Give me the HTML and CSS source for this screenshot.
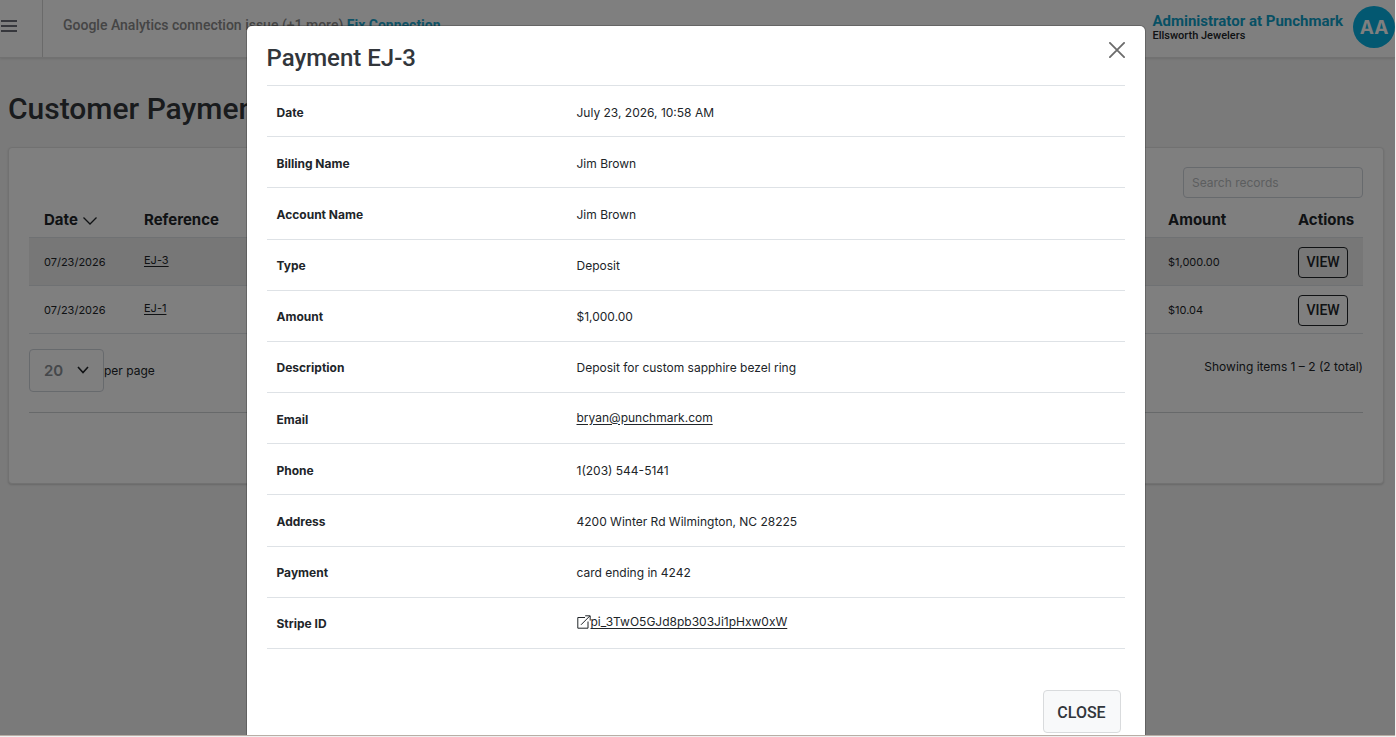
FILE: index.html
```html
<!DOCTYPE html>
<html lang="en">
<head>
  <meta charset="UTF-8" />
  <meta name="viewport" content="width=device-width, initial-scale=1.0" />
  <title>Customer Payments</title>
  <link rel="stylesheet" href="styles.css">
</head>
<body>
  <div class="app">
    <!-- Top bar -->
    <header class="topbar">
      <button class="menu-toggle" type="button" aria-label="Menu">
        <svg width="16" height="12" viewBox="0 0 16 12" stroke="currentColor" stroke-width="2"><path d="M0 1h16M0 6h16M0 11h16" /></svg>
      </button>
      <p class="notice">Google Analytics connection issue (+1 more) <a href="#">Fix Connection</a></p>
      <div class="account">
        <a href="#" class="account-name">Administrator at Punchmark</a>
        <span class="account-store">Ellsworth Jewelers</span>
      </div>
      <div class="avatar">AA</div>
    </header>

    <main>
      <h1>Customer Payments</h1>
      <section class="card">
        <input class="search" type="text" placeholder="Search records" aria-label="Search records" />
        <table class="payments">
          <thead>
            <tr>
              <th class="col-date">Date <svg width="14" height="8" viewBox="0 0 14 8" fill="none" stroke="currentColor" stroke-width="1.3"><path d="M0.5 0.5L7 7L13.5 0.5" /></svg></th>
              <th>Reference</th>
              <th class="col-amount">Amount</th>
              <th class="col-actions">Actions</th>
            </tr>
          </thead>
          <tbody>
            <tr>
              <td>07/23/2026</td>
              <td class="link-cell"><a href="#">EJ-3</a></td>
              <td>$1,000.00</td>
              <td><button class="view" type="button">VIEW</button></td>
            </tr>
            <tr>
              <td>07/23/2026</td>
              <td class="link-cell"><a href="#">EJ-1</a></td>
              <td>$10.04</td>
              <td><button class="view" type="button">VIEW</button></td>
            </tr>
          </tbody>
        </table>
        <div class="pager">
          <div class="per-page">
            <span class="select-wrap">
              <select id="perPage"><option>20</option></select>
              <svg width="12" height="8" viewBox="0 0 12 8" fill="none" stroke="currentColor" stroke-width="1.6"><path d="M1 1L6 6.5L11 1" /></svg>
            </span>
            <label for="perPage">per page</label>
          </div>
          <span class="showing">Showing items 1 – 2 (2 total)</span>
        </div>
      </section>
    </main>

    <!-- Payment dialog -->
    <div class="overlay">
      <div class="modal" role="dialog" aria-labelledby="modalTitle">
        <div class="modal-header">
          <h2 id="modalTitle">Payment EJ-3</h2>
          <button class="modal-x" type="button" aria-label="Close">
            <svg width="16" height="16" viewBox="0 0 16 16" stroke="currentColor" stroke-width="1.8" stroke-linecap="round"><path d="M0.9 0.9L15.1 15.1M15.1 0.9L0.9 15.1" /></svg>
          </button>
        </div>
        <table class="details">
          <tr><th>Date</th><td>July 23, 2026, 10:58 AM</td></tr>
          <tr><th>Billing Name</th><td>Jim Brown</td></tr>
          <tr><th>Account Name</th><td>Jim Brown</td></tr>
          <tr><th>Type</th><td>Deposit</td></tr>
          <tr><th>Amount</th><td>$1,000.00</td></tr>
          <tr><th>Description</th><td>Deposit for custom sapphire bezel ring</td></tr>
          <tr><th>Email</th><td class="link-cell"><a href="#">bryan@punchmark.com</a></td></tr>
          <tr><th>Phone</th><td>1(203) 544-5141</td></tr>
          <tr><th>Address</th><td>4200 Winter Rd Wilmington, NC 28225</td></tr>
          <tr><th>Payment</th><td>card ending in 4242</td></tr>
          <tr>
            <th>Stripe ID</th>
            <td class="link-cell"><a href="#"><svg width="14" height="14" viewBox="0 0 14 14" fill="none" stroke="currentColor"><path d="M8 2.5H0.8V13.2H11V6.5M4 9.8L12.8 1M8.2 0.8H13.2V5.6" /></svg>pi_3TwO5GJd8pb303Ji1pHxw0xW</a></td>
          </tr>
        </table>
        <div class="modal-footer">
          <button class="close-btn" type="button">CLOSE</button>
        </div>
      </div>
    </div>
  </div>
</body>
</html>
```

FILE: styles.css
```css
* {
  box-sizing: border-box;
}
body {
  margin: 0;
  padding: 0 1px 1px 0;
  height: 100vh;
  background: #f0f0f0;
  font-family: Inter, "Liberation Sans", sans-serif;
  font-size: 12px;
  color: #212529;
}
a {
  color: inherit;
  text-underline-offset: 2px;
}
button, input, select {
  font-family: inherit;
}
table {
  width: 100%;
  border-collapse: collapse;
  table-layout: fixed;
}
th {
  text-align: left;
}
.app {
  position: relative;
  height: 100%;
  overflow: hidden;
  background: #f4f4f4;
  border-bottom: 1px solid #b8aea6;
}

/* Top bar */
.topbar {
  display: flex;
  height: 58px;
  background: #fff;
  border-bottom: 1px solid #e2e2e2;
  box-shadow: 0 1px 2px rgba(0, 0, 0, 0.1);
  font-family: Roboto, sans-serif;
}
.menu-toggle {
  width: 43px;
  padding: 0 0 2px 1px;
  text-align: left;
  background: none;
  border: none;
  border-right: 1px solid #d4d4d4;
  color: #6c6f78;
}
.notice {
  flex: 1;
  margin: 0;
  padding: 15px 20px;
  font-size: 14px;
  line-height: 20px;
  font-weight: 500;
  color: #8a8a8a;
}
.notice a {
  font-weight: 700;
  color: #1ea5cc;
  text-decoration: none;
}
.account {
  display: flex;
  flex-direction: column;
  padding: 13px 10px 0 0;
}
.account-name {
  font-size: 15px;
  line-height: 16px;
  font-weight: 700;
  color: #0fa0c8;
  text-decoration: none;
}
.account-store {
  font-size: 11px;
  line-height: 14px;
  font-weight: 500;
}
.avatar {
  width: 42px;
  height: 42px;
  margin-top: 6px;
  border-radius: 50%;
  background: #06b0e2;
  color: #fff;
  font-family: Inter, sans-serif;
  font-size: 19px;
  font-weight: 700;
  line-height: 43px;
  text-align: center;
}

/* Payments list */
main {
  padding: 0 11px 0 8px;
}
h1 {
  margin: 0;
  padding: 31px 0 18px;
  font-family: Roboto, sans-serif;
  font-size: 30px;
  line-height: 40px;
  font-weight: 500;
  color: #32363b;
}
.card {
  display: flex;
  flex-direction: column;
  padding: 19px 20px 70px;
  background: #fff;
  border: 1px solid #e2e2e2;
  border-radius: 4px;
  box-shadow: 0 1px 2px rgba(0, 0, 0, 0.15);
}
.search {
  align-self: flex-end;
  width: 180px;
  height: 31px;
  padding: 0 8px;
  border: 1px solid #ced4da;
  border-radius: 4px;
  background: none;
  font-size: 12px;
}
.search::placeholder {
  color: #b9bcc0;
}
.payments th {
  height: 39px;
  padding: 4px 15px 0;
  font-size: 15px;
  font-weight: 700;
  border-bottom: 1px solid #dee2e6;
}
.payments td {
  height: 48px;
  padding: 2px 15px 0;
  font-size: 11px;
  border-bottom: 1px solid #dee2e6;
}
.payments tbody tr:first-child {
  background: #efefef;
}
.payments th svg {
  margin-left: 2px;
}
.payments .col-date {
  width: 100px;
  padding-right: 0;
  white-space: nowrap;
}
.payments .col-amount {
  width: 130px;
}
.payments .col-actions {
  width: 80px;
  padding-right: 0;
}
.view {
  display: block;
  width: 50px;
  height: 31px;
  padding: 0;
  border: 1px solid #212529;
  border-radius: 4px;
  background: none;
  font-family: Roboto, sans-serif;
  font-size: 14px;
  font-weight: 500;
  color: #212529;
}
.pager {
  display: flex;
  justify-content: space-between;
  padding: 15px 0 20px;
  border-bottom: 1px solid #cfd2d5;
}
.per-page {
  display: flex;
  align-items: center;
}
.select-wrap {
  display: grid;
  align-items: center;
}
.select-wrap select, .select-wrap svg {
  grid-area: 1 / 1;
}
.select-wrap svg {
  justify-self: end;
  margin-right: 15px;
  pointer-events: none;
}
.select-wrap select {
  appearance: none;
  width: 75px;
  height: 43px;
  padding: 0 14px;
  border: 1px solid #ced4da;
  border-radius: 4px;
  background: none;
  font-size: 15px;
  font-weight: 600;
  color: #8b9096;
}
.showing {
  padding-top: 10px;
}

/* Dialog */
.overlay {
  position: absolute;
  inset: 0;
  padding: 26px 4px 0 0;
  background: rgba(0, 0, 0, 0.5);
}
.modal {
  max-width: 898px;
  height: 100%;
  margin: 0 auto;
  padding: 0 20px;
  background: #fff;
  border-radius: 5px 5px 0 0;
  box-shadow: 0 0 0 1px rgba(0, 0, 0, 0.2);
}
.modal-header {
  display: flex;
  justify-content: space-between;
  align-items: flex-start;
  height: 59px;
}
.modal-header h2 {
  margin: 0;
  padding-top: 16px;
  font-family: Roboto, sans-serif;
  font-size: 24px;
  line-height: 32px;
  font-weight: 500;
  color: #32363b;
}
.modal-x {
  margin-top: 16px;
  padding: 0;
  background: none;
  border: none;
  color: #6b6b6b;
}
.modal-x svg {
  display: block;
}
.details {
  height: 564px;
  border-top: 1px solid #dee2e6;
}
.details th, .details td {
  padding: 2px 10px 0;
  border-bottom: 1px solid #dee2e6;
}
.details th {
  width: 300px;
  font-weight: 700;
}
.payments .link-cell, .details .link-cell {
  padding-top: 0;
  padding-bottom: 2px;
}
.details svg {
  vertical-align: -3px;
}
.modal-footer {
  display: flex;
  justify-content: flex-end;
  padding: 41px 4px 20px;
}
.close-btn {
  width: 78px;
  height: 43px;
  padding-top: 2px;
  border: 1px solid #d9dbdd;
  border-radius: 4px;
  background: #f8f9fa;
  font-family: Roboto, sans-serif;
  font-size: 16px;
  font-weight: 500;
  color: #32363b;
}
```
